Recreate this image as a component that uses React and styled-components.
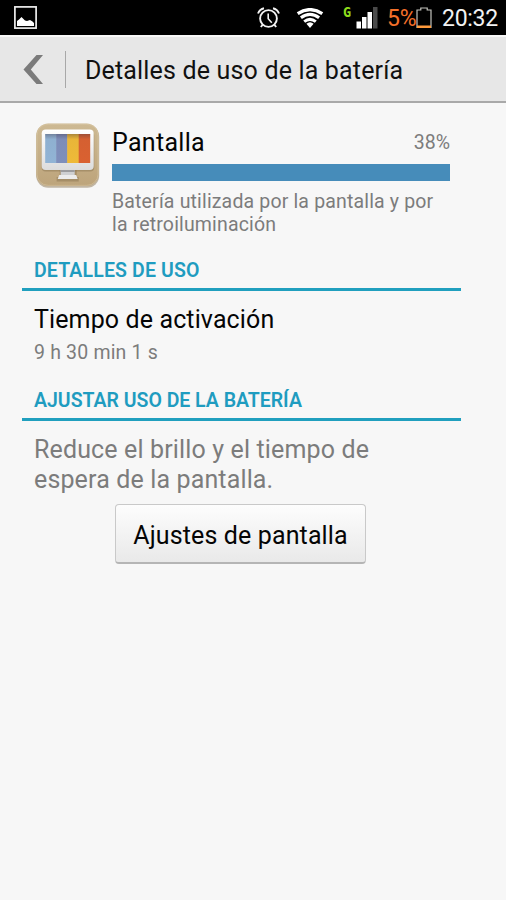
import React from 'react';
import styled, { createGlobalStyle } from 'styled-components';

const GlobalStyle = createGlobalStyle`
  body {
    margin: 0;
    background: #f7f7f7;
    font-family: Roboto, 'Liberation Sans', sans-serif;
  }

  * {
    box-sizing: border-box;
  }
`;

const Screen = styled.div`
  width: 506px;
  height: 900px;
  overflow: hidden;
  background: #f7f7f7;
`;

const StatusBar = styled.div`
  display: flex;
  align-items: center;
  justify-content: space-between;
  height: 35px;
  padding: 0 8px 0 14px;
  background: #000;
`;

const StatusIcons = styled.div`
  display: flex;
  align-items: center;
  height: 35px;
`;

const StatusSvg = styled.svg`
  display: block;
  flex: none;
  margin-right: ${p => p.$gap || 0}px;
`;

const StatusText = styled.span`
  width: ${p => p.$width}px;
  padding-top: 2px;
  color: ${p => p.$color};
  font-size: 23px;
  line-height: 35px;
  letter-spacing: -0.3px;
  white-space: nowrap;
`;

const Header = styled.header`
  display: flex;
  align-items: center;
  height: 68px;
  padding: 0 0 0 23px;
  border-top: 2px solid #f8f8f8;
  border-bottom: 2px solid #a9a9a9;
  background: #e7e7e7;
`;

const BackButton = styled.button`
  display: flex;
  align-items: center;
  width: 43px;
  height: 37px;
  padding: 0;
  border: none;
  border-right: 1px solid #a8a8a8;
  background: none;
`;

const Title = styled.h1`
  margin: 0 0 0 19px;
  padding-top: 3px;
  color: #111;
  font-size: 25px;
  font-weight: 400;
  line-height: 32px;
  letter-spacing: 0.17px;
  white-space: nowrap;
`;

const Content = styled.main`
  width: 439px;
  margin: 20px 0 0 22px;
`;

const Summary = styled.section`
  display: flex;
  height: 128px;
  padding: 0 11px 0 12px;
`;

const SummaryBody = styled.div`
  flex: 1;
  margin-left: 11px;
`;

const SummaryRow = styled.div`
  display: flex;
  align-items: center;
  justify-content: space-between;
  height: 41px;
  padding-bottom: 2px;
`;

const Name = styled.span`
  color: #050505;
  font-size: 25px;
  line-height: 38px;
  letter-spacing: 0.3px;
`;

const Percent = styled.span`
  color: #7c7c7c;
  font-size: 19.5px;
  line-height: 38px;
`;

const Bar = styled.div`
  height: 17px;
  background: #468cba;
`;

const Description = styled.p`
  margin: 9px 0 0;
  color: #7c7c7c;
  font-size: 19.5px;
  line-height: 23px;
  letter-spacing: 0.16px;
  white-space: nowrap;
`;

const SectionTitle = styled.h2`
  height: 40px;
  margin: 0;
  padding-left: 12px;
  border-bottom: 3px solid #209fbe;
  color: #1f9cc0;
  font-size: 19.5px;
  font-weight: 600;
  line-height: 39px;
  letter-spacing: ${p => p.$spacing || 0}px;
  white-space: nowrap;
`;

const Detail = styled.section`
  height: 90px;
  padding: 14px 0 0 12px;
`;

const DetailName = styled.div`
  color: #050505;
  font-size: 25px;
  line-height: 30px;
  letter-spacing: 0.12px;
`;

const DetailValue = styled.div`
  margin-top: 6px;
  color: #7c7c7c;
  font-size: 19.5px;
  line-height: 24px;
  letter-spacing: 0.18px;
`;

const Hint = styled.p`
  margin: 0;
  padding: 14px 0 0 12px;
  color: #7c7c7c;
  font-size: 25px;
  line-height: 29.5px;
  letter-spacing: 0.14px;
  white-space: nowrap;
`;

const SettingsButton = styled.button`
  display: block;
  width: 251px;
  height: 60px;
  margin: 10px 0 0 93px;
  padding: 4px 0 0;
  border: 1px solid #c9c9c9;
  border-bottom: 2px solid #b5b5b5;
  border-radius: 4px;
  background: linear-gradient(#fdfdfd, #e9e9e9);
  color: #050505;
  font-family: inherit;
  font-size: 25px;
  letter-spacing: 0.13px;
`;

const PictureIcon = () => (
  <StatusSvg width="23" height="23" viewBox="0 0 23 23">
    <rect x="0.9" y="0.9" width="21.2" height="21.2" fill="none" stroke="#eee" strokeWidth="1.7" />
    <path d="M3 20v-5l2-1.500 2.500-2.500 3.500 3.500 2 0.500 3-1 2.500 1.500 1.500 1.500v3z" fill="#fff" />
  </StatusSvg>
);

const AlarmIcon = () => (
  <StatusSvg $gap={16} width="23" height="22" viewBox="0 0 23 22" fill="none" stroke="#f2f2f2">
    <circle cx="11.5" cy="11.5" r="8.4" strokeWidth="1.9" />
    <path d="M11.2 6.500v5.200l3.600 4" strokeWidth="1.600" />
    <path d="M1 6.500C2 4 4 2 7 1.300M22 6.500C21 4 19 2 16 1.300" strokeWidth="1.900" />
    <path d="M5.800 17.600l-2 2.400M17.200 17.600l2 2.400" strokeWidth="1.900" />
  </StatusSvg>
);

const WifiIcon = () => (
  <StatusSvg $gap={19} width="28" height="20" viewBox="0 0 28 20" fill="none" stroke="#fff">
    <path d="M1.700 5.600Q14-2.400 26.300 5.600" strokeWidth="3.300" />
    <path d="M4.900 9.800Q14 3 23.100 9.800" strokeWidth="3.200" />
    <path d="M8.200 13.700Q14 9 19.800 13.700" strokeWidth="3" />
    <path d="M10.400 15.800Q14 12.700 17.600 15.800L14 19.900z" fill="#fff" stroke="none" />
  </StatusSvg>
);

const NetworkType = styled.span`
  align-self: flex-start;
  width: 13px;
  margin-top: 4px;
  color: #8edc1c;
  font-family: 'DejaVu Sans Mono', monospace;
  font-size: 13.5px;
  font-weight: 700;
  line-height: 16px;
`;

const SignalIcon = () => (
  <StatusSvg $gap={9} width="22" height="22" viewBox="0 0 22 22">
    <path d="M0.500 14.500h4.500v7h-4.500zM6 10h4.500v11.500H6zM11.500 5H16v16.500h-4.500z" fill="#fff" />
    <path d="M17 0h4.500v21.500H17z" fill="#4a4a4a" />
  </StatusSvg>
);

const BatteryIcon = () => (
  <StatusSvg $gap={10} width="16" height="22" viewBox="0 0 16 22">
    <path
      d="M1 20.500V3h3.800V1h6.400v2H15v17.500z"
      fill="none"
      stroke="#c4c4bd"
      strokeWidth="1.200"
    />
    <path d="M1 18.500h14V21H1z" fill="#ff9a3c" />
  </StatusSvg>
);

const BackIcon = () => (
  <svg width="20" height="29" viewBox="0 0 20 29">
    <path d="M13.500 0H20L7.800 14.500 20 29h-6.500L0.500 14.500z" fill="#7b7b7b" />
  </svg>
);

const AppIconSvg = styled.svg`
  display: block;
  flex: none;
  margin-left: 2px;
`;

const DisplayIcon = () => (
  <AppIconSvg width="65" height="66" viewBox="0.3 0 65 66">
    <defs>
      <linearGradient id="case" x1="0" y1="0" x2="0" y2="1">
        <stop offset="0" stopColor="#cdb993" />
        <stop offset="1" stopColor="#bda47b" />
      </linearGradient>
      <linearGradient id="frame" x1="0" y1="0" x2="0" y2="1">
        <stop offset="0" stopColor="#ffffff" />
        <stop offset="1" stopColor="#dcdcdc" />
      </linearGradient>
      <linearGradient id="shade" x1="0" y1="0" x2="0" y2="1">
        <stop offset="0" stopColor="#3a3040" stopOpacity="0.4" />
        <stop offset="0.18" stopColor="#3a3040" stopOpacity="0.08" />
        <stop offset="1" stopColor="#3a3040" stopOpacity="0.05" />
      </linearGradient>
    </defs>
    <rect x="0.500" y="1.800" width="63" height="63" rx="12" fill="#9c8a6c" opacity="0.600" />
    <rect x="0.500" y="0.500" width="62.500" height="62.500" rx="12" fill="url(#case)" />
    <rect x="1.300" y="1.300" width="61" height="61" rx="11" fill="none" stroke="#dccbaa" opacity="0.500" />
    <rect x="6" y="8.500" width="52.500" height="40" rx="4" fill="#8b7551" opacity="0.500" />
    <path d="M24 47h17v6H24zM21 54h22v4.500H21z" fill="#8b7551" opacity="0.500" />
    <path d="M25 45h14v8H25z" fill="#cfd0d2" />
    <path d="M25 47h14v2H25z" fill="#9c9c9e" />
    <path d="M23.500 52h17l1.500 4H22z" fill="#ececec" />
    <rect x="6" y="6.500" width="52" height="40.500" rx="4" fill="url(#frame)" />
    <path d="M9.500 11h11.500v29H9.500z" fill="#96bbdd" />
    <path d="M20.500 11h11.500v29H20.500z" fill="#8294c2" />
    <path d="M31.500 11h12v29h-12z" fill="#f8c138" />
    <path d="M43 11h11.500v29H43z" fill="#e26430" />
    <rect x="9.500" y="11" width="45" height="29" fill="url(#shade)" />
  </AppIconSvg>
);

export default function App() {
  return (
    <>
      <GlobalStyle />
      <Screen>
        <StatusBar>
          <PictureIcon />
          <StatusIcons>
            <AlarmIcon />
            <WifiIcon />
            <NetworkType>G</NetworkType>
            <SignalIcon />
            <StatusText $color="#f4702a" $width={29}>
              5%
            </StatusText>
            <BatteryIcon />
            <StatusText $color="#f2f2f2" $width={56}>
              20:32
            </StatusText>
          </StatusIcons>
        </StatusBar>
        <Header>
          <BackButton aria-label="Atrás">
            <BackIcon />
          </BackButton>
          <Title>Detalles de uso de la batería</Title>
        </Header>
        <Content>
          <Summary>
            <DisplayIcon />
            <SummaryBody>
              <SummaryRow>
                <Name>Pantalla</Name>
                <Percent>38%</Percent>
              </SummaryRow>
              <Bar />
              <Description>
                Batería utilizada por la pantalla y por
                <br />
                la retroiluminación
              </Description>
            </SummaryBody>
          </Summary>
          <SectionTitle $spacing={0.15}>DETALLES DE USO</SectionTitle>
          <Detail>
            <DetailName>Tiempo de activación</DetailName>
            <DetailValue>9 h 30 min 1 s</DetailValue>
          </Detail>
          <SectionTitle $spacing={-0.02}>AJUSTAR USO DE LA BATERÍA</SectionTitle>
          <Hint>
            Reduce el brillo y el tiempo de
            <br />
            espera de la pantalla.
          </Hint>
          <SettingsButton>Ajustes de pantalla</SettingsButton>
        </Content>
      </Screen>
    </>
  );
}
